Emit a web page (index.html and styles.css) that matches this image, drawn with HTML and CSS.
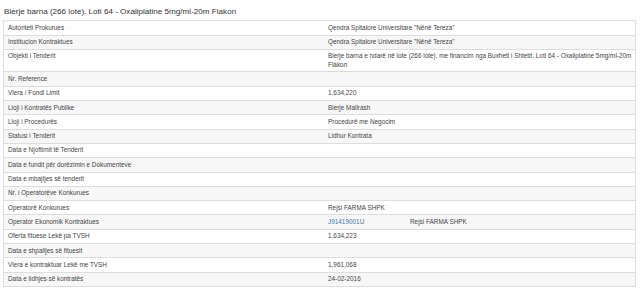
FILE: index.html
```html
<!DOCTYPE html>
<html>
<head>
<meta charset="utf-8">
<link rel="stylesheet" href="styles.css">
</head>
<body>
<div class="page">
  <h4 class="title">Blerje barna (266 lote). Loti 64 - Oxaliplatine 5mg/ml-20m Flakon</h4>
  <table class="details">
    <tbody>
      <tr><td class="label">Autoriteti Prokurues</td><td>Qendra Spitalore Universitare "Nënë Tereza"</td></tr>
      <tr><td class="label">Institucion Kontraktues</td><td>Qendra Spitalore Universitare "Nënë Tereza"</td></tr>
      <tr><td class="label">Objekti i Tenderit</td><td>Blerje barna e ndarë në lote (266 lote), me financim nga Buxheti i Shtetit. Loti 64 - Oxaliplatine 5mg/ml-20m Flakon</td></tr>
      <tr><td class="label">Nr. Reference</td><td></td></tr>
      <tr><td class="label">Vlera / Fondi Limit</td><td>1,634,220</td></tr>
      <tr><td class="label">Lloji i Kontratës Publike</td><td>Blerje Mallrash</td></tr>
      <tr><td class="label">Lloji i Procedurës</td><td>Procedurë me Negocim</td></tr>
      <tr><td class="label">Statusi i Tenderit</td><td>Lidhur Kontrata</td></tr>
      <tr><td class="label">Data e Njoftimit të Tenderit</td><td></td></tr>
      <tr><td class="label">Data e fundit për dorëzimin e Dokumenteve</td><td></td></tr>
      <tr><td class="label">Data e mbajtjes së tenderit</td><td></td></tr>
      <tr><td class="label">Nr. i Operatorëve Konkurues</td><td></td></tr>
      <tr><td class="label">Operatorë Konkurues</td><td>Rejsi FARMA SHPK</td></tr>
      <tr><td class="label">Operator Ekonomik Kontraktues</td><td><div class="pair"><a class="nipt" href="#">J91419001U</a><span>Rejsi FARMA SHPK</span></div></td></tr>
      <tr><td class="label">Oferta fituese Lekë pa TVSH</td><td>1,634,223</td></tr>
      <tr><td class="label">Data e shpalljes së fituesit</td><td></td></tr>
      <tr><td class="label">Vlera e kontraktuar Lekë me TVSH</td><td>1,961,068</td></tr>
      <tr><td class="label">Data e lidhjes së kontratës</td><td>24-02-2016</td></tr>
    </tbody>
  </table>
</div>
</body>
</html>
```
FILE: styles.css
```css
html, body {
  margin: 0;
  padding: 0;
  background: #ffffff;
}
body {
  font-family: "Liberation Sans", Arial, sans-serif;
  color: #333333;
}
.page {
  padding: 0 4px 0 3px;
}
.title {
  margin: 0;
  padding: 6.5px 0 0 1px;
  height: 20.3px;
  box-sizing: border-box;
  font-size: 8.1px;
  line-height: 10px;
  font-weight: normal;
  color: #333333;
}
.details {
  width: 100%;
  border-collapse: collapse;
  border: 1px solid #dddddd;
  font-size: 6.4px;
  line-height: 8.3px;
  color: #444444;
}
.details td {
  border-top: 1px solid #dddddd;
  padding: 2.5px 3px 2.5px 4px;
  vertical-align: top;
  text-align: left;
}
.details td.label {
  width: 313px;
}
.details tr:nth-child(even) td {
  background: #f7f7f7;
}
.pair {
  display: flex;
}
.nipt {
  width: 82px;
  color: #3a76b0;
  text-decoration: none;
}
```
